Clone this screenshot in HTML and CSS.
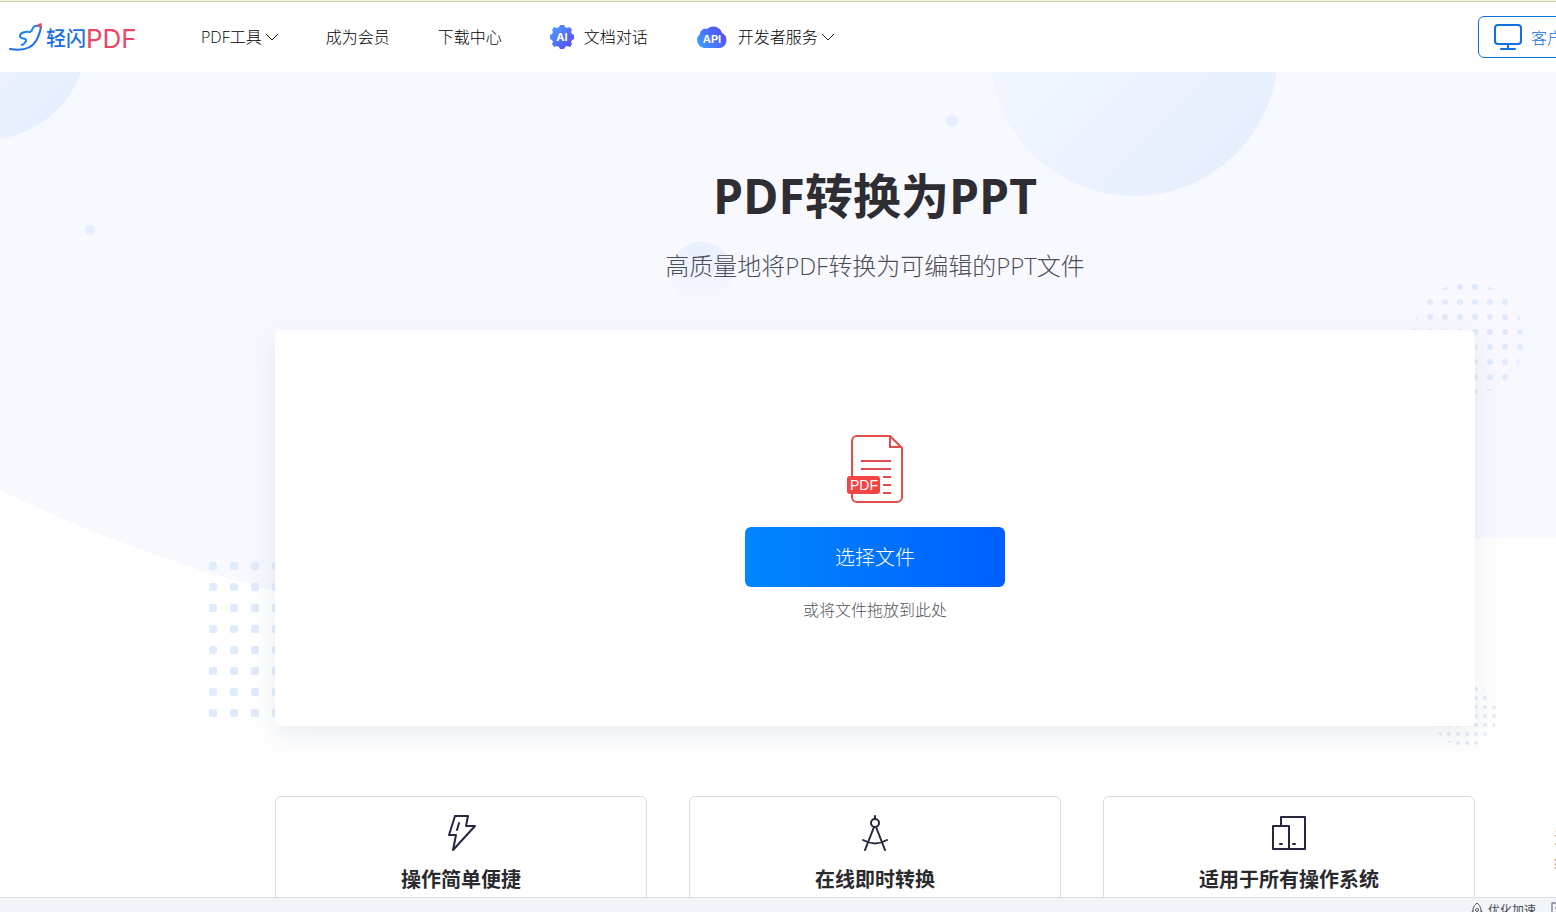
FILE: index.html
```html
<!DOCTYPE html>
<html lang="zh-CN">
<head>
    <meta charset="UTF-8">
    <meta name="viewport" content="width=device-width, initial-scale=1.0">
    <title>PDF转换为PPT - 轻闪PDF</title>
    <link rel="stylesheet" href="styles.css">
</head>
<body>
    <div class="window">
      <div class="top-strip"></div>
      <div class="page">
        <header class="header">
          <a class="logo" href="#">
            <svg width="34" height="30" viewBox="0 0 34 30" fill="none" stroke-linecap="round" stroke-linejoin="round">
              <path d="M1 27c12 2 21 0 26-8 3-5 4-9 5-14" stroke="#1b6fe8" stroke-width="2"/>
              <path d="M30 4c-3-1-6 0-7 4-1 1-1 2-2 2-5-1-10 1-10 4 0 4 7 1 6 5-1 2-2 3-4 4" stroke="#1b84ee" stroke-width="2"/>
              <path d="M29 2l4-1-1 6-3-3z" fill="#ee4566"/>
            </svg>
            <span class="logo-name">轻闪</span><span class="logo-pdf">PDF</span>
          </a>
          <nav class="nav">
            <a href="#">PDF工具
              <svg class="arrow" width="12" height="8" viewBox="0 0 12 8"><path d="M0 1l6 6 6-6"/></svg>
            </a>
            <a href="#">成为会员</a>
            <a href="#">下载中心</a>
            <a class="with-icon" href="#">
              <svg width="24" height="24" viewBox="0 0 24 24">
                <defs>
                  <linearGradient id="ai" x1="0" y1="0" x2="1" y2="1">
                    <stop offset="0" stop-color="#4fa3ff"/>
                    <stop offset="1" stop-color="#5546f5"/>
                  </linearGradient>
                </defs>
                <path d="M10 0h4l1 2 2 1 3-1 2 3-1 2 1 2 2 1v4l-2 1-1 2 1 2-2 3-3-1-2 1-1 2h-4l-1-2-2-1-3 1-2-3 1-2-1-2-2-1v-4l2-1 1-2-1-2 2-3 3 1 2-1z" fill="url(#ai)"/>
                <text x="12" y="16" text-anchor="middle" class="icon-text">AI</text>
              </svg>
              文档对话
            </a>
            <a class="with-icon" href="#">
              <svg width="32" height="24" viewBox="0 0 32 24">
                <defs>
                  <linearGradient id="api" x1="0" y1="1" x2="1" y2="0.4">
                    <stop offset="0" stop-color="#3fa0ff"/>
                    <stop offset="1" stop-color="#5150f6"/>
                  </linearGradient>
                </defs>
                <path d="M8 23a8 8 0 0 1-4-14c0-4 4-6 7-5a9 9 0 0 1 15 4a8 8 0 0 1-2 15z" fill="url(#api)"/>
                <text x="16" y="18" text-anchor="middle" class="icon-text">API</text>
              </svg>
              开发者服务
              <svg class="arrow" width="12" height="8" viewBox="0 0 12 8"><path d="M0 1l6 6 6-6"/></svg>
            </a>
          </nav>
          <button class="client" type="button">
            <svg width="28" height="28" viewBox="0 0 28 28" fill="none" stroke="#0f6fe0" stroke-width="2" stroke-linecap="round">
              <rect x="1" y="2" width="26" height="19" rx="3"/>
              <path d="M14 21v5M7 26h14"/>
            </svg>
            客户端
          </button>
        </header>

        <main class="hero">
          <svg class="hero-bg" width="1750" height="700" viewBox="0 0 1750 700">
            <defs>
              <linearGradient id="round" x1="0" y1="0" x2="1" y2="1">
                <stop offset="0" stop-color="#f8faff"/>
                <stop offset="1" stop-color="#e4edfe"/>
              </linearGradient>
              <linearGradient id="fade" x1="0" y1="0" x2="0" y2="1">
                <stop offset="0" stop-color="#e8effe"/>
                <stop offset="1" stop-color="#f8f9ff"/>
              </linearGradient>
              <pattern id="squares" x="209" y="490" width="21" height="21" patternUnits="userSpaceOnUse">
                <rect width="8" height="8" rx="2" fill="#e0ecfd"/>
              </pattern>
              <pattern id="dots" x="1422" y="207" width="15" height="15" patternUnits="userSpaceOnUse">
                <circle cx="8" cy="8" r="3" fill="#dfeafd"/>
              </pattern>
              <pattern id="tiny" x="1435" y="612" width="9" height="9" patternUnits="userSpaceOnUse">
                <circle cx="5" cy="5" r="2" fill="#e4ecf8"/>
              </pattern>
            </defs>
            <path d="M0 0H1750V466H1475C1100 470 700 600 275 519Q200 500 180 491Q80 458 0 418z" fill="#f8f9ff"/>
            <circle cx="-15" cy="-34" r="102" fill="url(#round)"/>
            <circle cx="1134" cy="-20" r="144" fill="url(#round)"/>
            <circle cx="952" cy="49" r="6" fill="#e6eefe"/>
            <circle cx="90" cy="158" r="5" fill="#e6eefe"/>
            <circle cx="701" cy="201" r="31" fill="url(#fade)"/>
            <circle cx="1468" cy="267" r="56" fill="url(#dots)"/>
            <rect x="209" y="490" width="84" height="168" fill="url(#squares)"/>
            <circle cx="1465" cy="643" r="32" fill="url(#tiny)"/>
          </svg>

          <h1>PDF转换为PPT</h1>
          <p class="subtitle">高质量地将PDF转换为可编辑的PPT文件</p>

          <section class="upload">
            <svg width="58" height="70" viewBox="0 0 58 70" fill="none" stroke="#e34c4c" stroke-width="2">
              <path d="M44 2H11a5 5 0 0 0-5 5v56a5 5 0 0 0 5 5h40a5 5 0 0 0 5-5V14z"/>
              <path d="M44 2v11h11"/>
              <path d="M15 27h30M15 35h30M37 43h8M37 51h8M37 59h8"/>
              <rect x="1" y="42" width="33" height="18" rx="3" fill="#f24444" stroke="none"/>
              <text x="18" y="56" text-anchor="middle" class="file-text">PDF</text>
            </svg>
            <button class="choose" type="button">选择文件</button>
            <p class="hint">或将文件拖放到此处</p>
          </section>

          <section class="features">
            <article class="feature">
              <svg width="36" height="38" viewBox="0 0 36 38">
                <path d="M12 2h13l-2 10h9L10 36l3-15H6z"/>
                <path d="M16 9l-2 7"/>
              </svg>
              <h2>操作简单便捷</h2>
            </article>
            <article class="feature">
              <svg width="36" height="38" viewBox="0 0 36 38">
                <path d="M18 2v3M17 13L8 36M19 13l9 23M6 26q12 7 24 0"/>
                <circle cx="18" cy="9" r="4"/>
              </svg>
              <h2>在线即时转换</h2>
            </article>
            <article class="feature">
              <svg width="36" height="38" viewBox="0 0 36 38">
                <path d="M10 12V3h24v32H18M2 12h16v23H2zM9 30h2M22 30h2"/>
              </svg>
              <h2>适用于所有操作系统</h2>
            </article>
          </section>
        </main>
      </div>

      <aside class="side-tab">活<br>给</aside>

      <footer class="status">
        <svg width="14" height="20" viewBox="0 0 14 20" fill="none" stroke="#555c66">
          <path d="M3 14V7q1-4 4-6 3 2 4 6v7zM3 8l-2 4v4l3-3M11 8l2 4v4l-3-3"/>
          <circle cx="7" cy="8" r="1.5"/>
        </svg>
        <span>优化加速</span>
        <svg class="panel-icon" width="14" height="16" viewBox="0 0 14 16" fill="none" stroke="#555c66">
          <rect x="1" y="1" width="12" height="14"/>
          <path d="M4 6h6"/>
        </svg>
      </footer>
    </div>
</body>
</html>
```
FILE: styles.css
```css
*{
  box-sizing: border-box;
}

body{
  margin: 0;
  font-family: "Open Sans", "Noto Sans CJK SC", sans-serif;
  font-size: 16px;
  line-height: 24px;
  color: black;
  background-color: white;
}

h1, h2, p{
  margin: 0;
}

a{
  color: inherit;
  text-decoration: none;
}

button{
  font-family: inherit;
  cursor: pointer;
}

svg{
  flex: none;
}

.window{
  position: relative;
  display: flex;
  flex-direction: column;
  height: 100vh;
  overflow: hidden;
}

.top-strip{
  flex: none;
  height: 2px;
  background-color: #f0f2dc;
  border-bottom: 1px solid #cfd3ae;
}

/* the site does not shrink below its desktop width */
.page{
  flex: 1;
  min-height: 0;
  min-width: 1750px;
  overflow: hidden;
}

/* header */
.header{
  display: flex;
  align-items: center;
  height: 70px;
  padding: 0 160px 0 9px;
  background-color: white;
}

.logo{
  display: flex;
  align-items: center;
  width: 192px;
}

.logo-name{
  margin-left: 3px;
  padding-top: 4px;
  font-size: 20px;
  font-weight: 500;
  color: #1a6fe0;
}

.logo-pdf{
  padding-top: 4px;
  font-family: Inter, sans-serif;
  font-size: 26px;
  color: #ea4668;
}

.nav{
  display: flex;
  gap: 48px;
  font-weight: 300;
}

.nav a{
  display: flex;
  align-items: center;
  gap: 4px;
}

.nav .with-icon svg:first-child{
  margin-right: 6px;
}

.arrow path{
  fill: none;
  stroke: #222;
}

.icon-text{
  font: bold 11px Inter, sans-serif;
  fill: white;
}

.client{
  display: flex;
  align-items: center;
  gap: 9px;
  width: 112px;
  height: 42px;
  margin-left: auto;
  padding: 0 15px;
  border: 1px solid #0f6fe0;
  border-radius: 6px;
  background-color: white;
  color: #0f6fe0;
  font-size: 16px;
  font-weight: 300;
  white-space: nowrap;
}

/* hero */
.hero{
  position: relative;
  display: flex;
  flex-direction: column;
  align-items: center;
  padding-top: 92px;
}

.hero-bg{
  position: absolute;
  top: 0;
  left: 0;
  z-index: -1;
}

h1{
  font-size: 48px;
  line-height: 64px;
  font-weight: bold;
  color: #2d2d33;
}

.subtitle{
  margin-top: 22px;
  font-size: 24px;
  line-height: 32px;
  font-weight: 300;
  color: #4c4d55;
}

.upload{
  display: flex;
  flex-direction: column;
  align-items: center;
  width: 1200px;
  height: 396px;
  margin-top: 48px;
  padding-top: 104px;
  border-radius: 6px;
  background-color: white;
  box-shadow: 0 10px 30px rgba(50, 80, 120, 0.1);
}

.file-text{
  font: 14px "Liberation Sans", sans-serif;
  fill: white;
  stroke: none;
}

.choose{
  width: 260px;
  height: 60px;
  margin-top: 23px;
  padding-bottom: 3px;
  border: 0;
  border-radius: 6px;
  background: linear-gradient(90deg, #0086ff, #005fff);
  color: white;
  font-size: 20px;
  font-weight: 300;
}

.hint{
  margin-top: 11px;
  font-weight: 300;
  color: #50545c;
}

/* features */
.features{
  display: grid;
  grid-template-columns: repeat(3, 1fr);
  gap: 42px;
  width: 1200px;
  margin-top: 70px;
}

.feature{
  display: flex;
  flex-direction: column;
  align-items: center;
  height: 180px;
  padding-top: 17px;
  border: 1px solid #dcdcde;
  border-radius: 6px;
  background-color: white;
}

.feature svg{
  fill: none;
  stroke: #25283f;
  stroke-width: 2;
  stroke-linecap: round;
  stroke-linejoin: round;
}

.feature h2{
  margin-top: 14px;
  font-size: 20px;
  line-height: 28px;
  color: #2a2a2e;
}

.side-tab{
  position: absolute;
  right: -14px;
  bottom: 38px;
  font-size: 16px;
  color: #999;
}

/* status bar */
.status{
  display: flex;
  justify-content: flex-end;
  flex: none;
  gap: 4px;
  height: 15px;
  padding-top: 4px;
  border-top: 1px solid #dbdfe3;
  background-color: #f1f5f9;
  font-size: 12px;
  line-height: 18px;
  color: #444b55;
  overflow: hidden;
}

.panel-icon{
  margin-left: 11px;
  margin-right: -9px;
}
```
